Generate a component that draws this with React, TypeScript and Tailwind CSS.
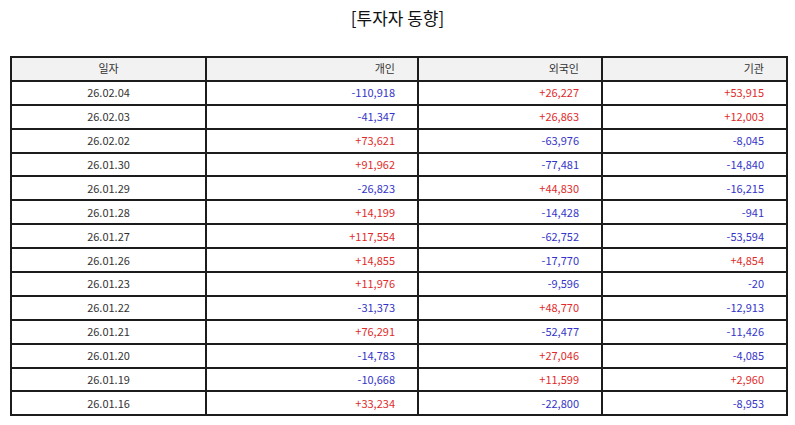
import React from 'react';

type Row = [string, string, string, string];

const ROWS: Row[] = [
  ['26.02.04', '-110,918', '+26,227', '+53,915'],
  ['26.02.03', '-41,347', '+26,863', '+12,003'],
  ['26.02.02', '+73,621', '-63,976', '-8,045'],
  ['26.01.30', '+91,962', '-77,481', '-14,840'],
  ['26.01.29', '-26,823', '+44,830', '-16,215'],
  ['26.01.28', '+14,199', '-14,428', '-941'],
  ['26.01.27', '+117,554', '-62,752', '-53,594'],
  ['26.01.26', '+14,855', '-17,770', '+4,854'],
  ['26.01.23', '+11,976', '-9,596', '-20'],
  ['26.01.22', '-31,373', '+48,770', '-12,913'],
  ['26.01.21', '+76,291', '-52,477', '-11,426'],
  ['26.01.20', '-14,783', '+27,046', '-4,085'],
  ['26.01.19', '-10,668', '+11,599', '+2,960'],
  ['26.01.16', '+33,234', '-22,800', '-8,953'],
];

const tone = (v: string) => (v.startsWith('-') ? 'text-[#3434c8]' : 'text-[#e02b2b]');

const cell = 'h-[23.9px] border-2 border-[#1c1c1c] px-[22px] py-0 leading-none';

export default function App() {
  return (
    <div className="h-[425px] w-[795px] bg-white font-['Noto_Sans_CJK_KR','Noto_Sans',sans-serif] text-[#333]">
      <h1 className="pt-[5px] text-center text-[17px] leading-[25px] text-[#111]">[투자자 동향]</h1>
      <div className="px-[10px] pt-[26px]">
        <table className="w-[776px] table-fixed border-collapse text-[11px]">
          <colgroup>
            <col className="w-[195px]" />
            <col className="w-[212px]" />
            <col className="w-[184px]" />
            <col className="w-[185px]" />
          </colgroup>
          <thead>
            <tr className="bg-[#f2f2f2]">
              <th className={`${cell} text-center font-normal`}>일자</th>
              <th className={`${cell} text-right font-normal`}>개인</th>
              <th className={`${cell} text-right font-normal`}>외국인</th>
              <th className={`${cell} text-right font-normal`}>기관</th>
            </tr>
          </thead>
          <tbody>
            {ROWS.map(([date, person, foreign, inst]) => (
              <tr key={date}>
                <td className={`${cell} text-center`}>{date}</td>
                <td className={`${cell} text-right ${tone(person)}`}>{person}</td>
                <td className={`${cell} text-right ${tone(foreign)}`}>{foreign}</td>
                <td className={`${cell} text-right ${tone(inst)}`}>{inst}</td>
              </tr>
            ))}
          </tbody>
        </table>
      </div>
    </div>
  );
}
